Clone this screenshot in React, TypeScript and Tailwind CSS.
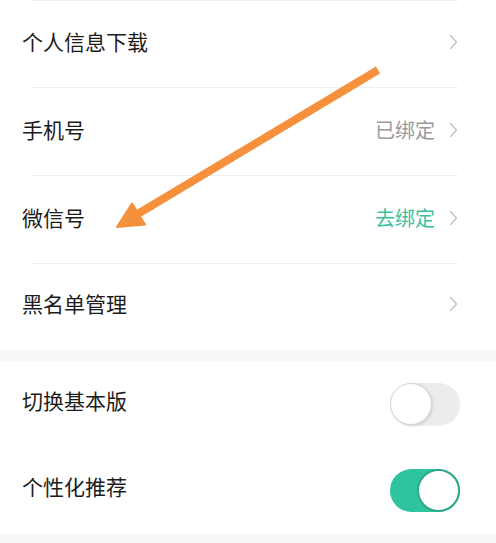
import React from "react";

const Chevron = () => (
  <svg width="9" height="16" viewBox="0 0 9 16" className="ml-[14px]">
    <path d="M1.5 1.5 L7.5 8 L1.5 14.5" fill="none" stroke="#c4c4c4" strokeWidth="1.4" strokeLinecap="round" strokeLinejoin="round" />
  </svg>
);

const Row = ({ label, value, valueClass, divider = true, last = false }: { label: string; value?: string; valueClass?: string; divider?: boolean; last?: boolean }) => (
  <div className="relative">
    <div className={`flex h-[87px] items-center justify-between pl-[22px] pr-[38px] ${last ? "pb-[8px]" : "pb-[4px]"}`}>
      <span className="text-[21px] text-[#1c1c1c]">{label}</span>
      <div className="flex items-center">
        {value && <span className={`text-[20px] ${valueClass}`}>{value}</span>}
        <Chevron />
      </div>
    </div>
    {divider && <div className="mx-[32px] mr-[38px] h-px bg-[#efefef]" />}
  </div>
);

const Toggle = ({ on }: { on: boolean }) =>
  on ? (
    <div className="flex h-[43px] w-[70px] items-center justify-end rounded-full bg-[#2ec4a0]">
      <div className="h-[43px] w-[43px] rounded-full border-2 border-[#2fa888] bg-white" />
    </div>
  ) : (
    <div className="flex h-[43px] w-[70px] items-center justify-start rounded-full bg-[#ececec]">
      <div className="h-[42px] w-[42px] rounded-full border border-[#d6d6d6] bg-white shadow-[1px_1px_3px_rgba(0,0,0,0.12)]" />
    </div>
  );

const ToggleRow = ({ label, on }: { label: string; on: boolean }) => (
  <div className="flex h-[86px] items-center justify-between pl-[22px] pr-[36px]">
    <span className="-translate-y-[3px] text-[21px] text-[#1c1c1c]">{label}</span>
    <Toggle on={on} />
  </div>
);

export default function App() {
  return (
    <div className="relative h-[543px] w-[496px] overflow-hidden bg-white" style={{ fontFamily: '"Noto Sans CJK SC", "Noto Sans", sans-serif' }}>
      <div className="mx-[32px] mr-[38px] h-px bg-[#efefef]" />
      <div className="-mt-px">
        <Row label="个人信息下载" />
        <Row label="手机号" value="已绑定" valueClass="text-[#9a9a9a]" />
        <Row label="微信号" value="去绑定" valueClass="text-[#3bbf9c]" />
        <Row label="黑名单管理" divider={false} last />
      </div>
      <div className="mt-[-1px] h-[11px] bg-[#f8f8f8]" />
      <ToggleRow label="切换基本版" on={false} />
      <ToggleRow label="个性化推荐" on={true} />
      <div className="h-[12px] bg-[#f8f8f8]" />

      <svg className="pointer-events-none absolute left-0 top-0" width="496" height="543" viewBox="0 0 496 543">
        <line x1="378" y1="70" x2="136" y2="215" stroke="#f5913c" strokeWidth="8" />
        <polygon points="117,227 132,203.5 145,224.5" fill="#f5913c" stroke="#f5913c" strokeWidth="2" strokeLinejoin="round" />
      </svg>
    </div>
  );
}
